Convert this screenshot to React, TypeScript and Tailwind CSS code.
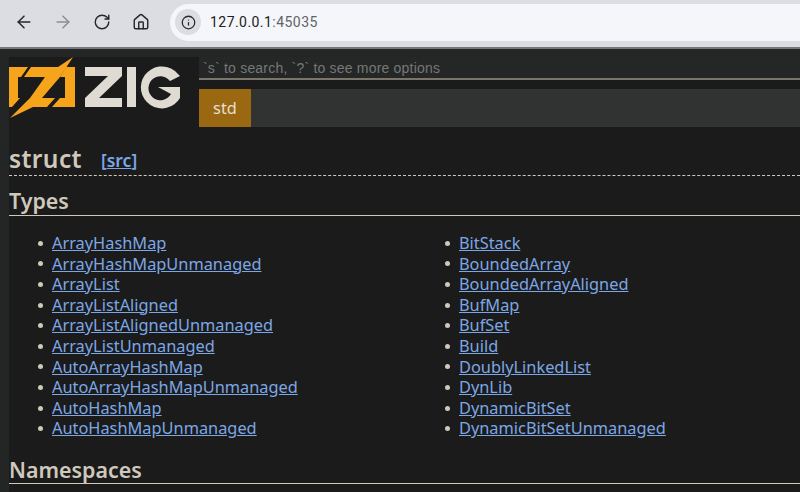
import { ArrowLeft, ArrowRight, House, Info, RotateCw } from 'lucide-react';

const TYPES_LEFT = [
  'ArrayHashMap',
  'ArrayHashMapUnmanaged',
  'ArrayList',
  'ArrayListAligned',
  'ArrayListAlignedUnmanaged',
  'ArrayListUnmanaged',
  'AutoArrayHashMap',
  'AutoArrayHashMapUnmanaged',
  'AutoHashMap',
  'AutoHashMapUnmanaged',
];

const TYPES_RIGHT = [
  'BitStack',
  'BoundedArray',
  'BoundedArrayAligned',
  'BufMap',
  'BufSet',
  'Build',
  'DoublyLinkedList',
  'DynLib',
  'DynamicBitSet',
  'DynamicBitSetUnmanaged',
];

// viewBox is in page coordinates, it was easier to trace that way
const ZigLogo = () => (
  <svg width="175" height="62" viewBox="9 57 175 62" className="shrink-0">
    <g fill="#f7a41d">
      <polygon points="9,67 28,67 21,77 18,77 18,98 20,98 12,107 9,107" />
      <polygon points="73,57 60,77 42,98 55,98 47,107 33,107 10,118 30,98 45,77 24,77 31,67 58,67" />
      <polygon points="66,67 75,67 75,107 52,107 60,98 65,98 65,77 60,77" />
    </g>
    <g fill="#e0dbd2">
      <polygon points="85,67 122,67 122,76 99,98 122,98 122,107 85,107 85,98 108,76 85,76" />
      <rect x="127" y="67" width="9" height="40" />
      <path d="M175 71 A21 21 0 1 0 180 98 L180 87 L158 87 L171 94 A12 12 0 1 1 170 81 L180 76 Z" />
    </g>
  </svg>
);

const TypeColumn = ({ items }: { items: string[] }) => (
  <ul className="w-[407px] shrink-0 pl-[29px]">
    {items.map((name) => (
      <li key={name} className="flex h-[20.6px] items-center leading-[20.6px]">
        <div className="mr-[9px] h-[5px] w-[5px] rounded-full bg-[#cfc8bb]" />
        <a href="#" className="text-[#7ba7e6] underline">
          {name}
        </a>
      </li>
    ))}
  </ul>
);

const App = () => {
  return (
    <div className="flex h-[492px] w-[800px] flex-col overflow-hidden bg-[#1b1b1b] font-['Noto_Sans',sans-serif] text-[16.35px]">
      <div className="flex h-[49px] shrink-0 items-center border-b-2 border-[#77787c] bg-[#dcdde2] pb-[3px] pl-[14px]">
        <div className="flex items-center text-[#26272a]">
          <ArrowLeft size={20} strokeWidth={1.8} />
          <ArrowRight size={20} strokeWidth={1.8} className="ml-[19px] text-[#8b8d91]" />
          <RotateCw size={18} strokeWidth={1.9} className="ml-[20px]" />
          <House size={18} strokeWidth={1.9} className="ml-[21px]" />
        </div>
        <div className="ml-[20px] flex h-[37px] flex-1 items-center rounded-l-full bg-[#f5f6f9] pl-[5px] font-['Roboto',sans-serif] text-[14px] tracking-[0.45px]">
          <div className="flex h-[26px] w-[26px] items-center justify-center rounded-full bg-[#dcdde2] text-[#26272a]">
            <Info size={15} strokeWidth={2} />
          </div>
          <span className="ml-[9px] text-[#202124]">127.0.0.1</span>
          <span className="text-[#5f6368]">:45035</span>
        </div>
      </div>

      <div className="flex min-h-0 flex-1 bg-[#232625]">
        <div className="w-[9px] shrink-0" />
        <div className="min-w-0 flex-1">
          <div className="h-[8px]" />
          <div className="h-[435px] bg-[#1b1b1b]">
            <div className="flex h-[71px]">
              <div className="w-[190px]">
                <ZigLogo />
              </div>
              <div className="flex-1">
                <div className="flex h-[23px] items-center border-b-[2px] border-[#7b766b] bg-[#242726] pl-[4px] pt-[2px] font-['Liberation_Sans',sans-serif] text-[14px] tracking-[0.2px] text-[#777]">
                  `s` to search, `?` to see more options
                </div>
                <div className="mt-[9px] flex h-[38px] bg-[#313332]">
                  <div className="flex w-[52px] items-center justify-center bg-[#9a6811] text-[#e5dfd3]">std</div>
                </div>
              </div>
            </div>

            <div className="mt-[13px] flex h-[35px] items-center border-b border-dashed border-[#cfc8bb] pt-[3px] text-[#cfc8bb]">
              <h1 className="text-[24.5px] font-semibold tracking-[0.4px]">struct</h1>
              <a href="#" className="ml-[19px] mt-[2px] text-[17.5px] font-semibold text-[#7ba7e6]">
                [<span className="underline">src</span>]
              </a>
            </div>

            <h2 className="mt-[10px] flex h-[30px] items-center border-b border-[#cfc8bb] pt-[2px] text-[21.4px] font-semibold text-[#cfc8bb]">
              Types
            </h2>

            <div className="mt-[17px] flex">
              <TypeColumn items={TYPES_LEFT} />
              <TypeColumn items={TYPES_RIGHT} />
            </div>

            <h2 className="mt-[18px] flex h-[27px] items-center border-b border-[#cfc8bb] text-[21.4px] font-semibold text-[#cfc8bb]">
              Namespaces
            </h2>
          </div>
        </div>
      </div>
    </div>
  );
};

export default App;
